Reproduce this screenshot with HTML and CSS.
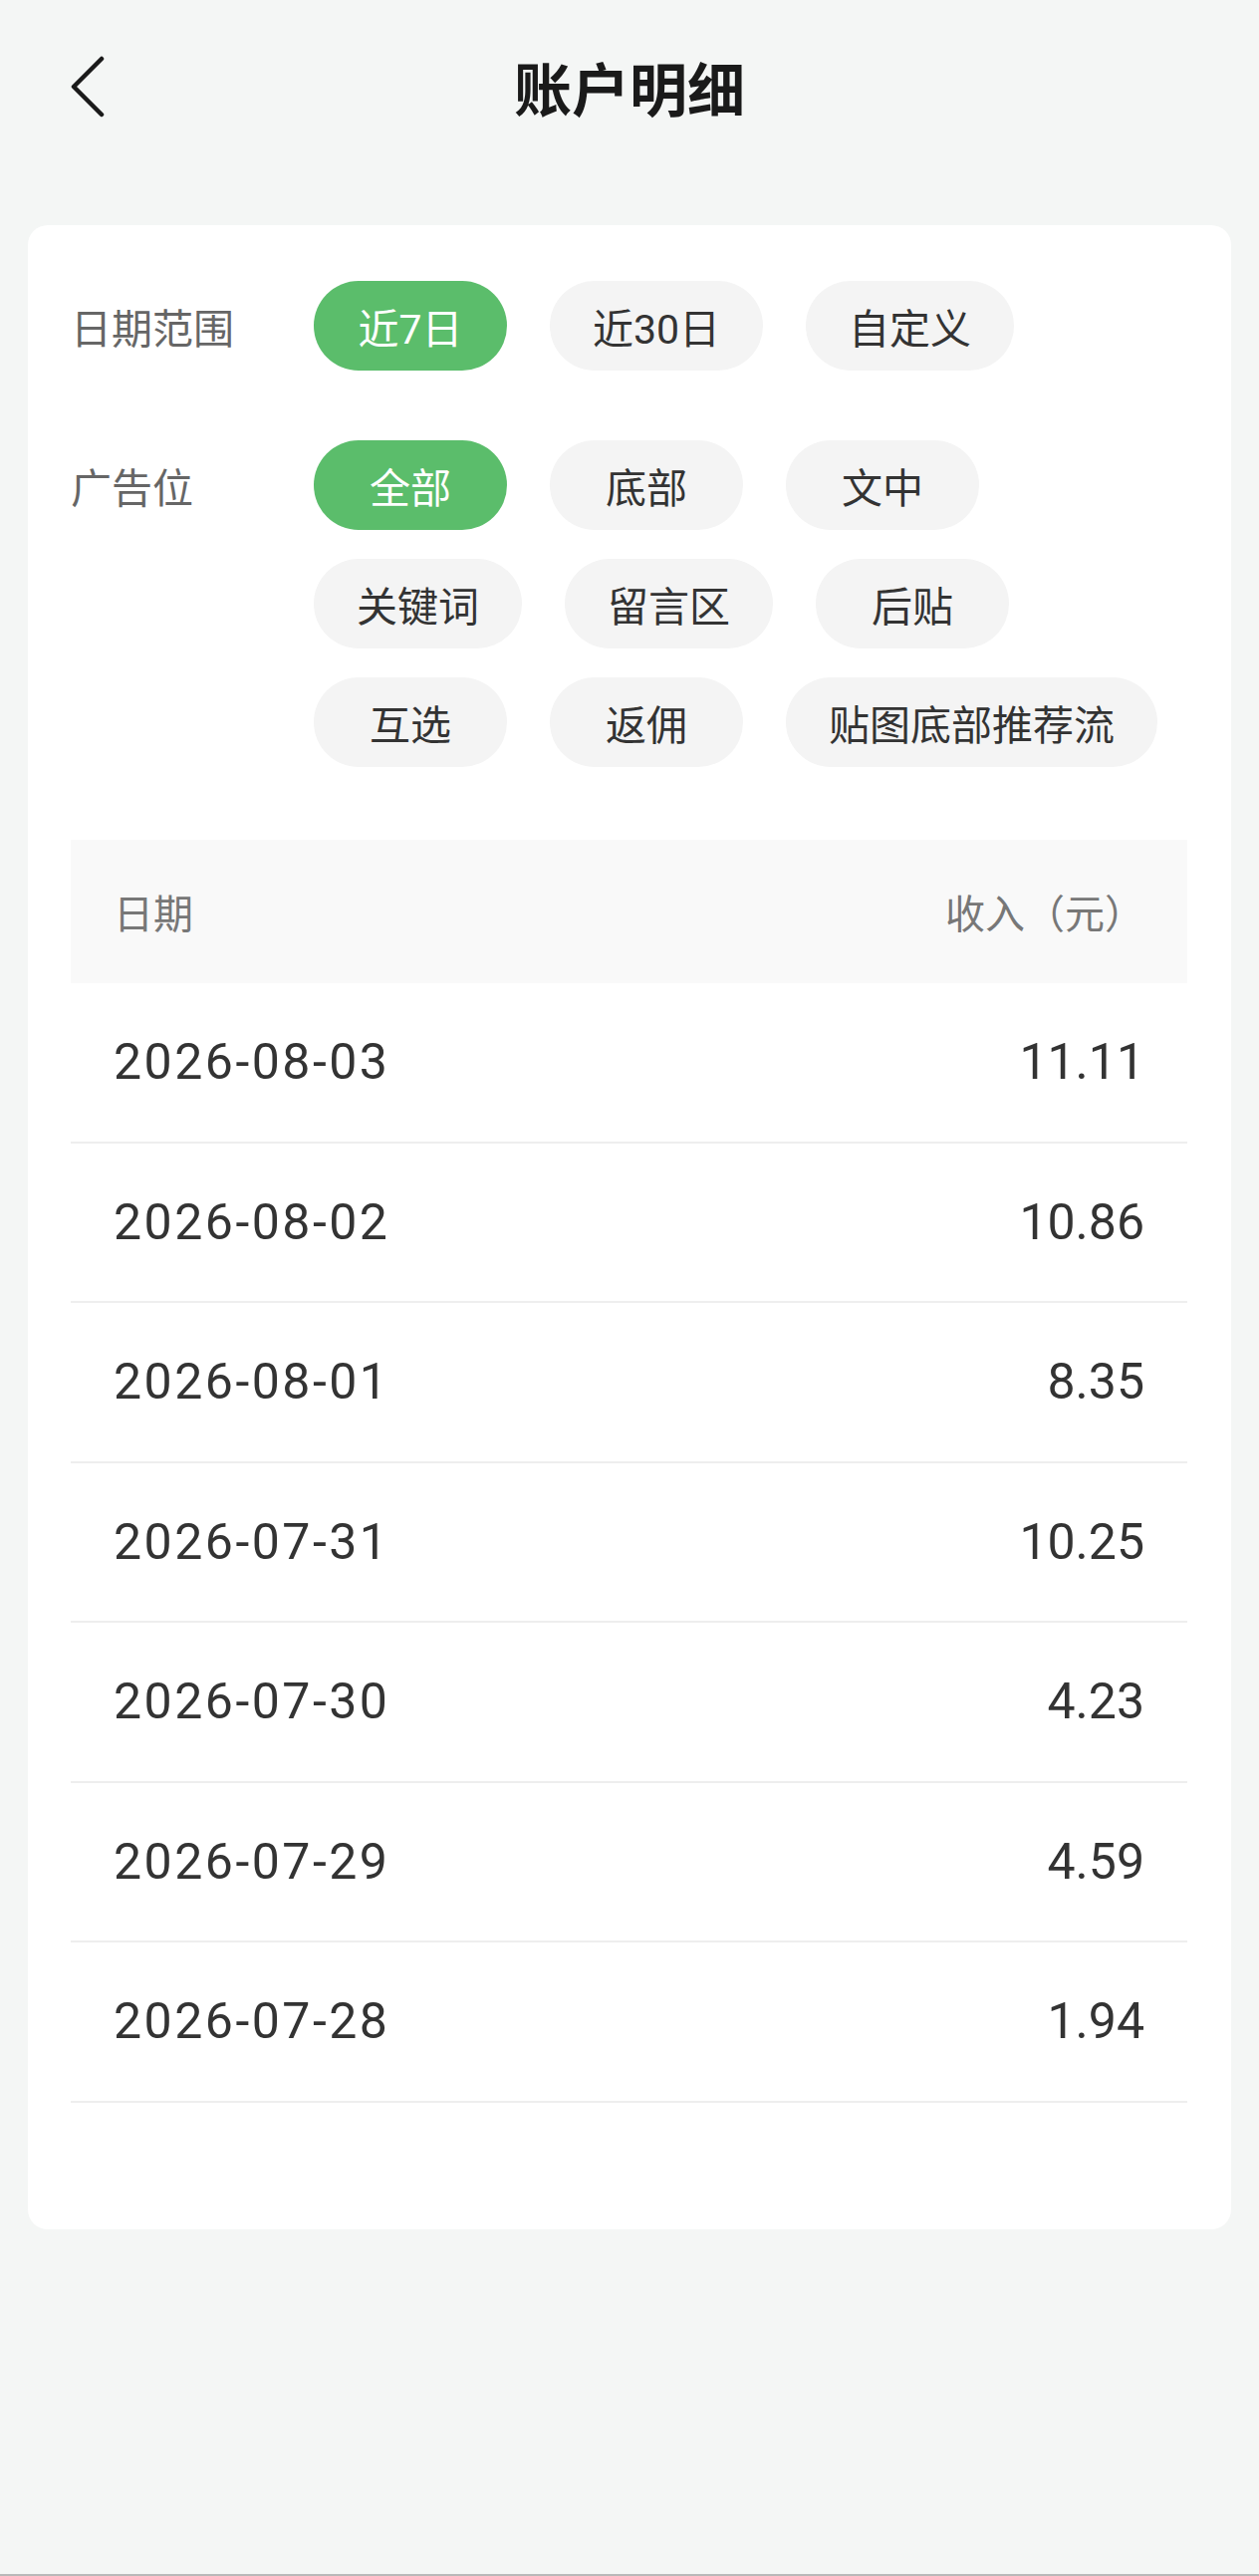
FILE: index.html
```html
<!DOCTYPE html>
<html lang="zh-CN">
<head>
  <meta charset="UTF-8">
  <meta name="viewport" content="width=device-width, initial-scale=1.0">
  <title>账户明细</title>
  <link rel="stylesheet" href="styles.css">
</head>
<body>
  <div class="nav">
    <a class="back" href="#">
      <svg width="40" height="64" viewBox="0 0 40 64">
        <polyline points="31,4 3,32 31,60" fill="none" stroke="#1a1a1a" stroke-width="4.5" stroke-linecap="round" stroke-linejoin="round"/>
      </svg>
    </a>
    <h1>账户明细</h1>
    <div></div>
  </div>

  <div class="card">
    <div class="filter-row">
      <div class="filter-label">日期范围</div>
      <div class="pills">
        <span class="pill active">近7日</span>
        <span class="pill">近30日</span>
        <span class="pill">自定义</span>
      </div>
    </div>
    <div class="filter-row">
      <div class="filter-label">广告位</div>
      <div class="pills">
        <span class="pill active">全部</span>
        <span class="pill">底部</span>
        <span class="pill">文中</span>
        <span class="pill">关键词</span>
        <span class="pill">留言区</span>
        <span class="pill">后贴</span>
        <span class="pill">互选</span>
        <span class="pill">返佣</span>
        <span class="pill">贴图底部推荐流</span>
      </div>
    </div>

    <table class="detail-table">
      <tr>
        <th>日期</th>
        <th class="num">收入（元）</th>
      </tr>
      <tr><td class="date">2026-08-03</td><td class="num">11.11</td></tr>
      <tr><td class="date">2026-08-02</td><td class="num">10.86</td></tr>
      <tr><td class="date">2026-08-01</td><td class="num">8.35</td></tr>
      <tr><td class="date">2026-07-31</td><td class="num">10.25</td></tr>
      <tr><td class="date">2026-07-30</td><td class="num">4.23</td></tr>
      <tr><td class="date">2026-07-29</td><td class="num">4.59</td></tr>
      <tr><td class="date">2026-07-28</td><td class="num">1.94</td></tr>
    </table>
  </div>
</body>
</html>
```

FILE: styles.css
```css
html, body {
  margin: 0;
  padding: 0;
}

body {
  font-family: Roboto, "Noto Sans CJK SC", sans-serif;
  background-color: #F4F6F5;
  color: #333;
  min-height: 100vh;
  box-sizing: border-box;
  border-bottom: 2px solid #b9b9b9;
}

.nav {
  height: 174px;
  display: grid;
  grid-template-columns: 1fr auto 1fr;
  align-items: center;
}

.back {
  display: flex;
  padding-left: 71px;
}

.nav h1 {
  margin: 0;
  font-size: 58px;
  font-weight: 700;
  color: #1a1a1a;
  font-family: "Noto Sans CJK SC", sans-serif;
}

.card {
  margin: 52px 28px 0;
  padding: 56px 44px 127px 43px;
  background-color: #FFFFFF;
  border-radius: 20px;
}

.filter-row {
  display: flex;
  margin-bottom: 70px;
}

.filter-label {
  width: 244px;
  flex-shrink: 0;
  font-size: 41px;
  line-height: 90px;
  color: #666;
  font-family: "Noto Sans CJK SC", sans-serif;
}

.pills {
  display: flex;
  flex-wrap: wrap;
  gap: 29px 43px;
}

.pill {
  height: 90px;
  min-width: 194px;
  box-sizing: border-box;
  padding: 0 43px;
  border-radius: 45px;
  background-color: #F4F4F4;
  color: #333;
  font-size: 41px;
  display: flex;
  align-items: center;
  justify-content: center;
}

.pill.active {
  background-color: #5BBD6B;
  color: #fff;
}

.detail-table {
  width: 100%;
  border-collapse: collapse;
  margin-top: 73px;
}

th, td {
  padding: 0 43px;
  text-align: left;
}

th {
  height: 144px;
  background-color: #F9F9F9;
  font-size: 40px;
  font-weight: 400;
  color: #777;
  font-family: "Noto Sans CJK SC", sans-serif;
}

td {
  height: 158.5px;
  font-size: 50px;
  color: #333;
  border-bottom: 2px solid #EEEEEE;
}

td.date {
  letter-spacing: 2.5px;
}

.num {
  text-align: right;
}
```
